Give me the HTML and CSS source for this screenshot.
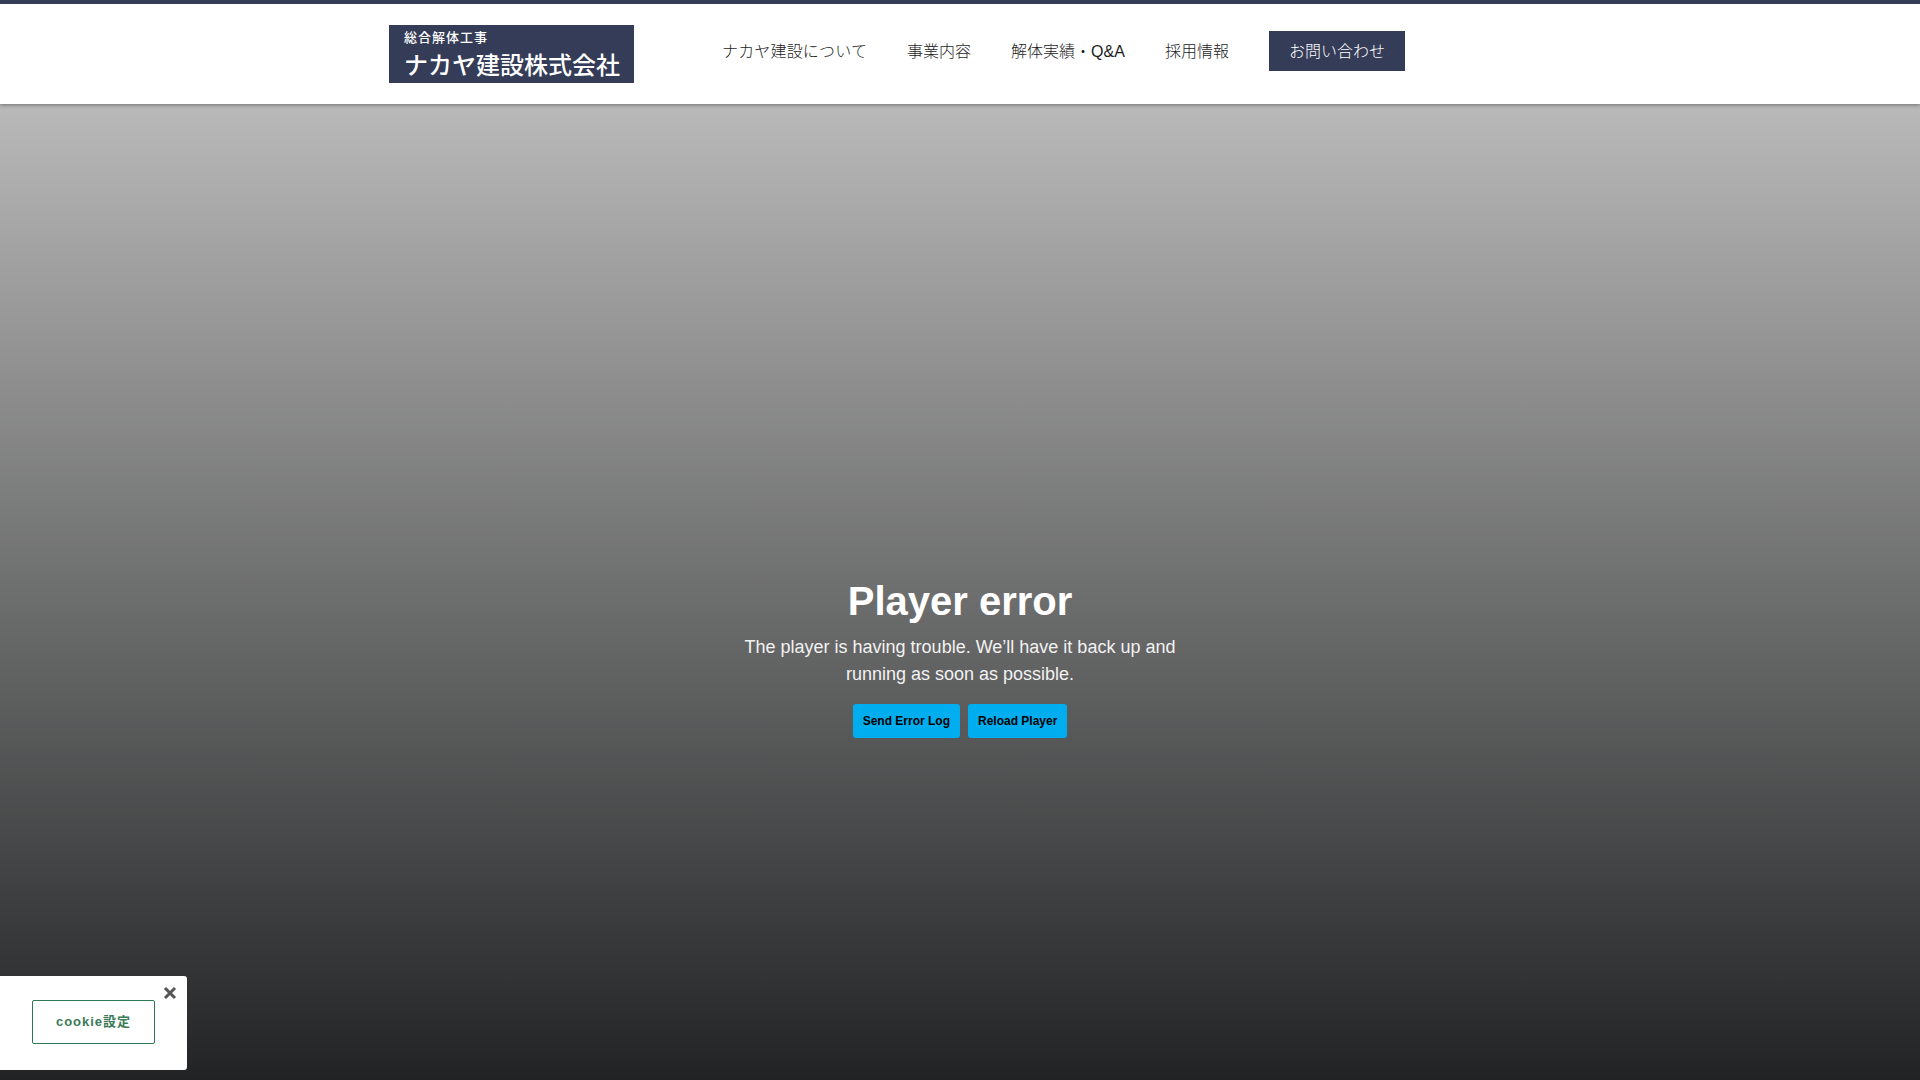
FILE: index.html
```html
<!DOCTYPE html>
<html lang="ja">
<head>
<meta charset="utf-8">
<title>ナカヤ建設株式会社</title>
<link rel="stylesheet" href="styles.css">
</head>
<body>
<header class="site-header">
  <a class="logo" href="#">
    <span class="logo-sub">総合解体工事</span>
    <span class="logo-main">ナカヤ建設株式会社</span>
  </a>
  <nav class="nav">
    <a class="nav-link first" href="#">ナカヤ建設について</a>
    <a class="nav-link" href="#">事業内容</a>
    <a class="nav-link" href="#">解体実績・Q&amp;A</a>
    <a class="nav-link" href="#">採用情報</a>
    <a class="nav-cta" href="#">お問い合わせ</a>
  </nav>
</header>
<main class="hero">
  <h1 class="error-title">Player error</h1>
  <p class="error-text">The player is having trouble. We’ll have it back up and running as soon as possible.</p>
  <div class="error-actions">
    <button class="error-btn send">Send Error Log</button>
    <button class="error-btn reload">Reload Player</button>
  </div>
</main>
<aside class="cookie">
  <button class="cookie-close" aria-label="閉じる">
    <svg viewBox="0 0 14 14" width="14" height="14"><path d="M2 2 L12 12 M12 2 L2 12" stroke="#555" stroke-width="3" fill="none"/></svg>
  </button>
  <button class="cookie-btn">cookie設定</button>
</aside>
</body>
</html>
```
FILE: styles.css
```css
* { box-sizing: border-box; }
html, body { margin: 0; height: 100%; }
body {
  height: 1080px;
  overflow: hidden;
  display: flex;
  flex-direction: column;
  font-family: "Liberation Sans", "Noto Sans CJK JP", sans-serif;
  background: #222;
}
.site-header {
  height: 104px;
  flex: none;
  border-top: 4px solid #353c57;
  background: #fff;
  display: flex;
  align-items: flex-start;
  padding-left: 389px;
  position: relative;
  z-index: 1;
  box-shadow: 0 1px 4px rgba(0, 0, 0, .4);
}
.logo {
  width: 245px;
  height: 58px;
  margin-top: 21px;
  background: #353c57;
  color: #fff;
  text-decoration: none;
  display: flex;
  flex-direction: column;
  padding: 5px 0 0 15px;
}
.logo-sub { font-size: 13px; line-height: 16px; letter-spacing: 1px; font-weight: 500; }
.logo-main { font-size: 24px; line-height: 30px; margin-top: 5px; white-space: nowrap; font-weight: 500; }
.nav {
  display: flex;
  align-items: center;
  margin-left: 88px;
  margin-top: 26px;
  height: 40px;
}
.nav-link {
  color: #1d1d1d;
  font-size: 16px;
  font-weight: 300;
  text-decoration: none;
  margin-right: 40px;
  white-space: nowrap;
}
.nav-link.first { margin-right: 40px; letter-spacing: .17px; }
.nav-cta {
  width: 136px;
  height: 40px;
  margin-top: 2px;
  padding-bottom: 2px;
  background: #353c57;
  color: #fff;
  font-size: 16px;
  font-weight: 300;
  text-decoration: none;
  display: flex;
  align-items: center;
  justify-content: center;
}
.hero {
  flex: 1;
  background: linear-gradient(180deg, #b9b9b9 0%, #222324 100%);
  display: flex;
  flex-direction: column;
  align-items: center;
  padding-top: 474px;
  color: #fff;
}
.error-title {
  margin: 0;
  font-size: 40px;
  line-height: 46px;
  font-weight: 700;
}
.error-text {
  margin: 10px 0 0;
  width: 440px;
  font-size: 18px;
  line-height: 27px;
  text-align: center;
  color: #f2f2f2;
}
.error-actions { display: flex; gap: 8px; margin-top: 16px; }
.error-btn {
  height: 34px;
  border: 0;
  border-radius: 3px;
  background: #00adef;
  color: #000;
  font: 700 12px "Liberation Sans", sans-serif;
  padding: 0 10px;
}
.cookie {
  position: absolute;
  left: 0;
  top: 976px;
  width: 187px;
  height: 94px;
  background: #fff;
  border-radius: 0 3px 3px 0;
}
.cookie-close {
  position: absolute;
  top: 6px;
  right: 6px;
  width: 22px;
  height: 22px;
  padding: 0;
  border: 0;
  background: none;
  display: flex;
  align-items: center;
  justify-content: center;
}
.cookie-btn {
  position: absolute;
  left: 32px;
  top: 24px;
  width: 123px;
  height: 44px;
  padding: 0 0 3px;
  background: #fff;
  border: 1px solid #2d7a52;
  border-radius: 2px;
  color: #3a7a58;
  font: 700 13px "Liberation Sans", "Noto Sans CJK JP", sans-serif;
  letter-spacing: 1px;
}
```
